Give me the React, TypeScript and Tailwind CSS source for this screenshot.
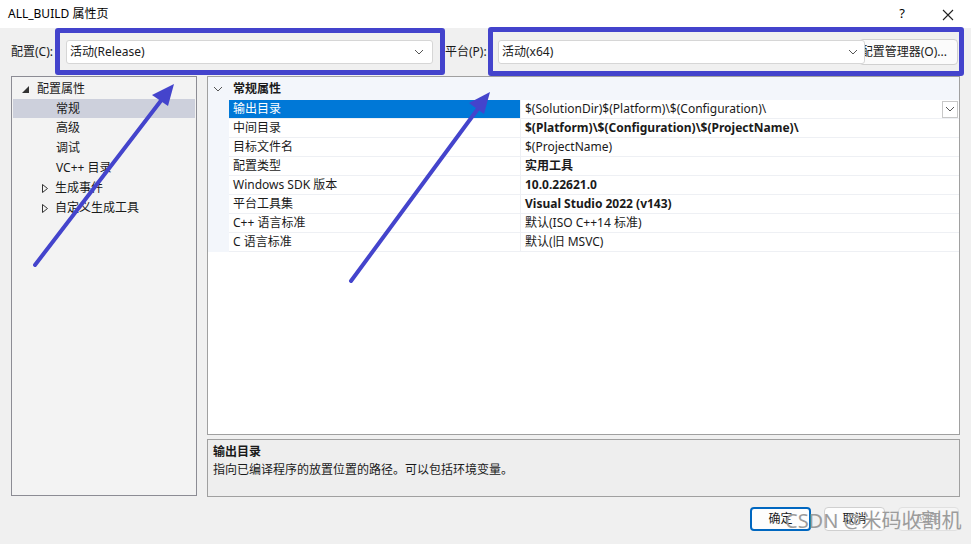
import React from "react";

const font = { fontFamily: '"Noto Sans", "Noto Sans CJK SC", sans-serif' };

function Chevron({ className = "" }: { className?: string }) {
  return (
    <svg width="10" height="6" viewBox="0 0 10 6" className={className}>
      <path d="M1 1 L5 5 L9 1" fill="none" stroke="#555" strokeWidth="1" />
    </svg>
  );
}

const rows: { name: string; value: string; bold?: boolean }[] = [
  { name: "输出目录", value: "$(SolutionDir)$(Platform)\\$(Configuration)\\" },
  { name: "中间目录", value: "$(Platform)\\$(Configuration)\\$(ProjectName)\\", bold: true },
  { name: "目标文件名", value: "$(ProjectName)" },
  { name: "配置类型", value: "实用工具", bold: true },
  { name: "Windows SDK 版本", value: "10.0.22621.0", bold: true },
  { name: "平台工具集", value: "Visual Studio 2022 (v143)", bold: true },
  { name: "C++ 语言标准", value: "默认(ISO C++14 标准)" },
  { name: "C 语言标准", value: "默认(旧 MSVC)" },
];

export default function App() {
  return (
    <div
      className="relative w-[971px] h-[544px] bg-[#f0f0f0] overflow-hidden flex flex-col text-[12px] text-[#1a1a1a]"
      style={font}
    >
      {/* title bar */}
      <div className="h-[28px] bg-white flex items-center pl-[8px] shrink-0">
        <span className="text-[12px] text-black">ALL_BUILD 属性页</span>
        <div className="ml-auto flex items-center">
          <span className="w-[46px] text-center text-[13px] text-black">?</span>
          <span className="w-[46px] text-center">
            <svg width="12" height="12" viewBox="0 0 12 12" className="inline-block">
              <path d="M1 1 L11 11 M11 1 L1 11" stroke="#222" strokeWidth="1.1" />
            </svg>
          </span>
        </div>
      </div>

      {/* config row */}
      <div className="h-[48px] flex items-center shrink-0">
        <span className="ml-[11px] w-[55px]">配置(C):</span>
        <div className="w-[367px] h-[24px] bg-white border border-[#d6d6d6] rounded-[3px] flex items-center pl-[3px] pr-[8px]">
          <span>活动(Release)</span>
          <Chevron className="ml-auto" />
        </div>
        <span className="ml-[12px] w-[53px]">平台(P):</span>
        <div className="w-[367px] h-[24px] bg-white border border-[#d6d6d6] rounded-[3px] flex items-center pl-[3px] pr-[6px] z-10">
          <span>活动(x64)</span>
          <Chevron className="ml-auto" />
        </div>
        <div className="-ml-[6px] w-[99px] h-[26px] bg-[#fbfbfb] border border-[#d0d0d0] rounded-[4px] flex items-center justify-end pr-[10px]">
          <span>配置管理器(O)...</span>
        </div>
      </div>

      {/* main */}
      <div className="flex gap-[10px] pl-[11px] shrink-0">
        {/* tree */}
        <div className="w-[186px] h-[420px] bg-[#f3f3f3] border border-[#8c8c94] pt-[2px] px-[1px]">
          <div className="h-[20px] flex items-center">
            <svg width="7" height="7" viewBox="0 0 7 7" className="ml-[9px] mr-[8px]">
              <path d="M7 0 L7 7 L0 7 Z" fill="#333" />
            </svg>
            <span>配置属性</span>
          </div>
          <div className="h-[19px] flex items-center bg-[#cdd0dc] pl-[43px]">常规</div>
          <div className="h-[20px] flex items-center pl-[43px]">高级</div>
          <div className="h-[20px] flex items-center pl-[43px]">调试</div>
          <div className="h-[20px] flex items-center pl-[43px]">VC++ 目录</div>
          {["生成事件", "自定义生成工具"].map((t) => (
            <div key={t} className="h-[20px] flex items-center">
              <svg width="6" height="9" viewBox="0 0 6 9" className="ml-[29px] mr-[7px]">
                <path d="M0.5 0.5 L5.5 4.5 L0.5 8.5 Z" fill="none" stroke="#333" strokeWidth="1" />
              </svg>
              <span>{t}</span>
            </div>
          ))}
        </div>

        {/* right */}
        <div className="w-[753px] flex flex-col gap-[4px]">
          <div className="h-[359px] bg-white border border-[#a0a0a0] flex flex-col">
            <div className="h-[23px] bg-[#f3f6fb] flex items-center">
              <Chevron className="ml-[5px] mr-[10px]" />
              <span className="font-bold">常规属性</span>
            </div>
            <div className="flex">
              <div className="w-[21px] bg-[#f3f6fb] h-[152px] shrink-0" />
              <div className="flex-1 flex flex-col">
                {rows.map((r, i) => (
                  <div key={r.name} className="h-[19px] flex border-b border-[#eef0f4]">
                    <div
                      className={
                        i === 0
                          ? "w-[292px] bg-[#0078d7] text-white pl-[4px] flex items-center border-r border-[#eef0f4]"
                          : "w-[292px] pl-[4px] flex items-center border-r border-[#eef0f4]"
                      }
                    >
                      {r.name}
                    </div>
                    <div className={r.bold ? "flex-1 pl-[4px] flex items-center font-bold" : "flex-1 pl-[4px] flex items-center"}>
                      {r.value}
                      {i === 0 && (
                        <div className="ml-auto mr-[1px] w-[16px] h-[17px] border border-[#c8c8c8] bg-white flex items-center justify-center">
                          <Chevron />
                        </div>
                      )}
                    </div>
                  </div>
                ))}
              </div>
            </div>
          </div>
          <div className="h-[58px] bg-[#eeeeee] border border-[#a0a0a0] px-[5px] pt-[3px]">
            <div className="font-bold leading-[18px]">输出目录</div>
            <div className="leading-[18px]">指向已编译程序的放置位置的路径。可以包括环境变量。</div>
          </div>
        </div>
      </div>

      {/* buttons */}
      <div className="flex justify-end gap-[13px] pr-[12px] mt-[10px]">
        <div className="w-[61px] h-[24px] bg-[#fdfdfd] border-2 border-[#0067c0] rounded-[4px] flex items-center justify-center">确定</div>
        <div className="w-[61px] h-[24px] bg-[#fdfdfd] border border-[#d0d0d0] rounded-[4px] flex items-center justify-center">取消</div>
        <div className="w-[61px] h-[24px] bg-[#f5f5f5] border border-[#e0e0e0] rounded-[4px] flex items-center justify-center text-[#a0a0a0]">应用</div>
      </div>

      {/* watermark */}
      <div className="absolute left-[785px] top-[511px] text-[20px] text-[#9c9c9c] leading-none whitespace-nowrap">
        CSDN @米码收割机
      </div>

      {/* annotation rectangles */}
      <div className="absolute left-[55px] top-[28px] w-[390px] h-[47px] border-[5px] border-[#4343cc] rounded-[3px]" />
      <div className="absolute left-[488px] top-[27px] w-[476px] h-[49px] border-[5px] border-[#4343cc] rounded-[3px]" />

      {/* arrows */}
      <svg className="absolute left-0 top-0" width="971" height="544" viewBox="0 0 971 544">
        <line x1="35" y1="265" x2="163" y2="98" stroke="#4444cc" strokeWidth="4" strokeLinecap="round" />
        <polygon points="174,84 152,95 168,106" fill="#4444cc" />
        <line x1="351" y1="281" x2="480" y2="106" stroke="#4444cc" strokeWidth="4" strokeLinecap="round" />
        <polygon points="490,92 469,103 484,114" fill="#4444cc" />
      </svg>
    </div>
  );
}
